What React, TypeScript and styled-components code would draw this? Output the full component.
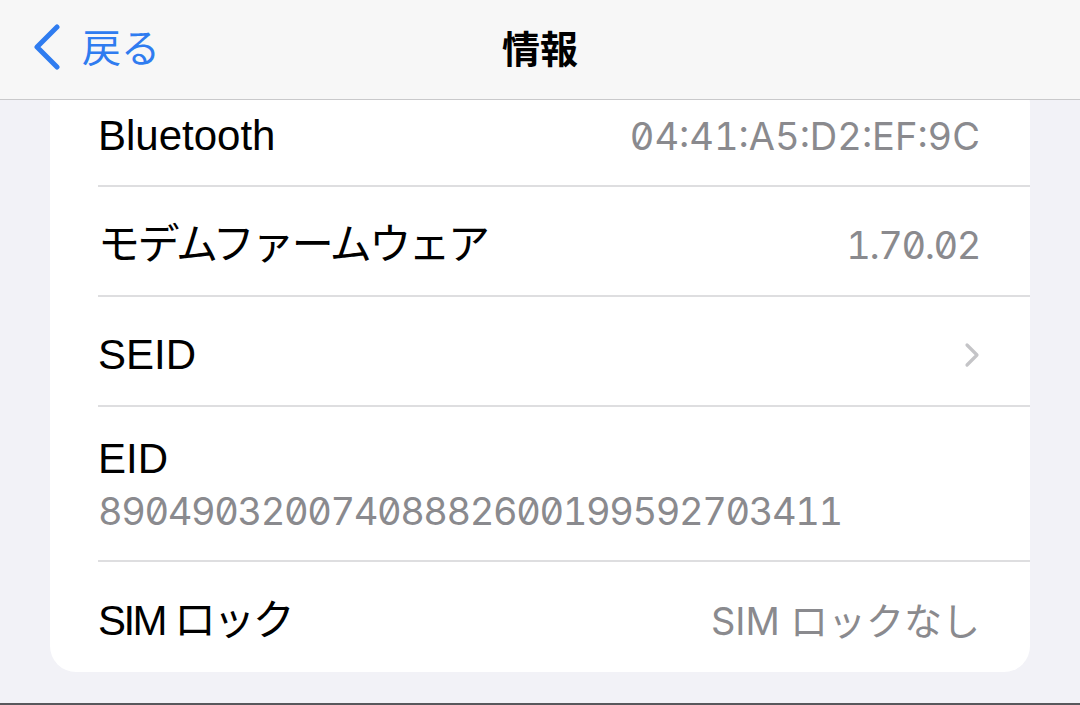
import styled, { createGlobalStyle } from "styled-components";

const GlobalStyle = createGlobalStyle`
    html, body {
        margin: 0;
        padding: 0;
        background: #f2f2f7;
    }
    body {
        font-family: "Inter", "Noto Sans CJK JP", sans-serif;
        -webkit-font-smoothing: antialiased;
    }
`

type Item = {
    label: string
    value?: string
    stacked?: boolean
    link?: boolean
}

const items: Item[] = [
    { label: "Bluetooth", value: "04:41:A5:D2:EF:9C" },
    { label: "モデムファームウェア", value: "1.70.02" },
    { label: "SEID", link: true },
    { label: "EID", value: "89049032007408882600199592703411", stacked: true },
    { label: "SIM ロック", value: "SIM ロックなし" },
]

const hasKana = (s: string) => /[\u3040-\u30ff]/.test(s)
const hasColon = (s: string) => s.includes(":")

function ChevronRight() {
    return (
        <svg width="16" height="26" viewBox="0 0 16 26" fill="none">
            <path d="M3 3l10 10-10 10" stroke="#c4c4c7" strokeWidth="3.2" strokeLinecap="round" strokeLinejoin="round"/>
        </svg>
    )
}

function ChevronLeft() {
    return (
        <svg width="30" height="46" viewBox="0 0 30 46" fill="none">
            <path d="M25 3L5 23l20 20" stroke="#2f7cf0" strokeWidth="5" strokeLinecap="round" strokeLinejoin="round"/>
        </svg>
    )
}

function App() {
    return (
        <>
            <GlobalStyle/>
            <Screen>
                <NavBar>
                    <BackButton>
                        <ChevronLeft/>
                        <span>戻る</span>
                    </BackButton>
                    <Title>情報</Title>
                </NavBar>
                <Content>
                    <Card>
                        {items.map((item, i) => (
                            <Row key={item.label} $stacked={item.stacked} $first={i === 0} $last={i === items.length - 1}>
                                <Label $kana={hasKana(item.label)}>{item.label}</Label>
                                {item.value && (
                                    <Value $wide={hasColon(item.value)} $kana={hasKana(item.value)}>
                                        {item.value}
                                    </Value>
                                )}
                                {item.link && <ChevronRight/>}
                            </Row>
                        ))}
                    </Card>
                </Content>
            </Screen>
        </>
    )
}

const Screen = styled.div`
    height: 705px;
    overflow: hidden;
    display: flex;
    flex-direction: column;
    background: #f2f2f7;
    border-bottom: 2px solid #58585c;
    box-sizing: border-box;
`

const NavBar = styled.header`
    position: relative;
    z-index: 1;
    height: 100px;
    flex-shrink: 0;
    box-sizing: border-box;
    background: #f7f7f7;
    border-bottom: 1px solid #c9c9cb;
    display: flex;
    align-items: center;
    justify-content: center;
`

const BackButton = styled.div`
    position: absolute;
    left: 32px;
    top: 24px;
    display: flex;
    align-items: center;
    gap: 20px;
    color: #2f7cf0;
    font-family: "Noto Sans CJK JP", sans-serif;
    font-size: 39px;
    line-height: 46px;

    & > span {
        margin-top: -4px;
    }
`

const Title = styled.h1`
    margin: -6px 0 0;
    font-family: "Noto Sans CJK JP", sans-serif;
    font-size: 38px;
    font-weight: 700;
    color: #000;
`

const Content = styled.main`
    padding: 0 50px;
`

const Card = styled.section`
    margin-top: -23px;
    background: #fff;
    border-radius: 26px;
    padding-left: 48px;
`

const Row = styled.div<{ $stacked?: boolean; $first?: boolean; $last?: boolean }>`
    display: flex;
    flex-direction: ${p => p.$stacked ? "column" : "row"};
    align-items: ${p => p.$stacked ? "flex-start" : "center"};
    justify-content: ${p => p.$stacked ? "center" : "space-between"};
    height: ${p => p.$stacked ? "155px" : "110px"};
    box-sizing: border-box;
    padding: ${p => p.$stacked ? "2px 50px 0 0" : "8px 50px 0 0"};
    padding-top: ${p => p.$first ? "10px" : undefined};
    border-bottom: ${p => p.$last ? "none" : "2px solid #dedee0"};
`

const Label = styled.span<{ $kana?: boolean }>`
    font-family: "Liberation Sans", "Noto Sans CJK JP", sans-serif;
    font-size: 42px;
    line-height: 52px;
    color: #000;
    letter-spacing: ${p => p.$kana ? "-2.6px" : "0"};
    white-space: nowrap;
`

const Value = styled.span<{ $wide?: boolean; $kana?: boolean }>`
    font-family: "Inter", "Noto Sans CJK JP", sans-serif;
    font-size: 38px;
    line-height: 52px;
    color: #8a8a8e;
    font-feature-settings: "tnum" 1, "zero" 1;
    letter-spacing: ${p => p.$wide || p.$kana ? "0" : "-1.4px"};
    white-space: nowrap;
`

export default App
